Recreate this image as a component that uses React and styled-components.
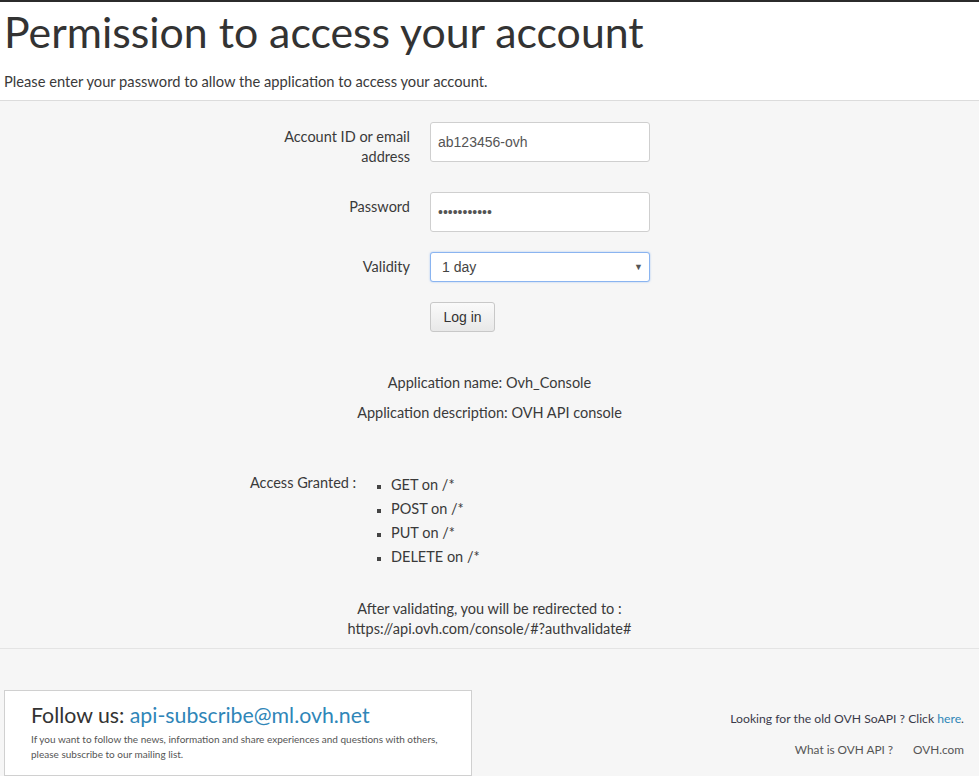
import React from 'react';
import styled, { createGlobalStyle } from 'styled-components';

const GlobalStyle = createGlobalStyle`
  html, body {
    margin: 0;
    padding: 0;
    background: #f6f6f6;
  }
  body {
    font-family: Lato, "Open Sans", sans-serif;
    color: #3a3a3a;
    font-size: 14.5px;
  }
`;

const rights = ['GET', 'POST', 'PUT', 'DELETE'];

function App() {
  return (
    <Page>
      <GlobalStyle />
      <Header>
        <Title>Permission to access your account</Title>
        <Lead>Please enter your password to allow the application to access your account.</Lead>
      </Header>

      <Main>
        <Form>
          <Label>Account ID or email address</Label>
          <Input type="text" defaultValue="ab123456-ovh" />

          <Label>Password</Label>
          <Input type="password" defaultValue="ab123456789" />

          <Label>Validity</Label>
          <SelectBox>
            <span>1 day</span>
            <Caret>▼</Caret>
          </SelectBox>

          <span />
          <Button type="button">Log in</Button>
        </Form>

        <AppInfo>
          <p>Application name: Ovh_Console</p>
          <p>Application description: OVH API console</p>
        </AppInfo>

        <Access>
          <AccessLabel>Access Granted :</AccessLabel>
          <RightList>
            {rights.map((r) => (
              <li key={r}>{r} on /*</li>
            ))}
          </RightList>
        </Access>

        <Redirect>
          After validating, you will be redirected to :<br />
          https://api.ovh.com/console/#?authvalidate#
        </Redirect>
      </Main>

      <Footer>
        <FollowBox>
          <FollowTitle>
            Follow us: <a href="#">api-subscribe@ml.ovh.net</a>
          </FollowTitle>
          <FollowText>
            If you want to follow the news, information and share experiences and questions with others,
            please subscribe to our mailing list.
          </FollowText>
        </FollowBox>
        <FooterLinks>
          <p>
            Looking for the old OVH SoAPI ? Click <a href="#">here</a>.
          </p>
          <FooterNav>
            <a href="#">What is OVH API ?</a>
            <a href="#">OVH.com</a>
          </FooterNav>
        </FooterLinks>
      </Footer>
    </Page>
  );
}

const Page = styled.div`
  border-top: 2px solid #2b2b2b;
  min-height: 774px;
`;

const Header = styled.header`
  background: #fff;
  border-bottom: 1px solid #dcdcdc;
  padding: 6px 4px 10px;
`;

const Title = styled.h1`
  margin: 0;
  font-size: 42.8px;
  font-weight: 400;
  line-height: 48px;
  color: #333;
`;

const Lead = styled.p`
  margin: 16px 0 0;
  font-size: 14.7px;
  line-height: 18px;
`;

const Main = styled.main`
  border-bottom: 1px solid #e4e4e4;
  padding: 21px 0 9px;
`;

const Form = styled.div`
  display: grid;
  grid-template-columns: 130px 220px;
  column-gap: 20px;
  row-gap: 20px;
  padding-left: 280px;
  align-items: start;
`;

const Label = styled.label`
  text-align: right;
  line-height: 20px;
  padding: 5px 0;
`;

const Input = styled.input`
  box-sizing: border-box;
  width: 220px;
  height: 40px;
  border: 1px solid #cfcfcf;
  border-radius: 3px;
  background: #fff;
  padding: 0 7px;
  font-family: "Liberation Sans", Arial, sans-serif;
  font-size: 14px;
  color: #555;
  outline: none;
`;

const SelectBox = styled.div`
  box-sizing: border-box;
  width: 220px;
  height: 30px;
  border: 1px solid #8ab4f0;
  border-radius: 3px;
  background: #fff;
  box-shadow: 0 0 2px rgba(102, 160, 240, 0.6);
  display: flex;
  align-items: center;
  justify-content: space-between;
  padding: 0 6px 0 11px;
  font-family: "Liberation Sans", Arial, sans-serif;
  font-size: 14px;
  color: #444;
`;

const Caret = styled.span`
  font-size: 9px;
  color: #555;
`;

const Button = styled.button`
  box-sizing: border-box;
  width: 65px;
  height: 30px;
  border: 1px solid #c8c8c8;
  border-radius: 3px;
  background: linear-gradient(#fafafa, #e8e8e8);
  font-family: "Liberation Sans", Arial, sans-serif;
  font-size: 14px;
  color: #333;
  padding: 0;
`;

const AppInfo = styled.div`
  text-align: center;
  padding: 42px 0 0 0;
  p {
    margin: 0 0 12px;
    line-height: 18px;
  }
`;

const Access = styled.div`
  display: flex;
  align-items: flex-start;
  padding: 39px 0 0 250px;
`;

const AccessLabel = styled.span`
  width: 110px;
  line-height: 20px;
`;

const RightList = styled.ul`
  margin: 0;
  padding: 0 0 0 31px;
  list-style: square;
  li {
    line-height: 24px;
  }
  li::marker {
    font-size: 11px;
    color: #444;
  }
`;

const Redirect = styled.p`
  margin: 30px 0 0;
  text-align: center;
  line-height: 20px;
`;

const Footer = styled.footer`
  display: flex;
  justify-content: space-between;
  align-items: flex-start;
  padding: 41px 15px 0 4px;
`;

const FollowBox = styled.div`
  box-sizing: border-box;
  width: 468px;
  height: 86px;
  background: #fff;
  border: 1px solid #d0d0d0;
  padding: 11px 24px 0 26px;
`;

const FollowTitle = styled.h3`
  margin: 0;
  font-size: 21.3px;
  font-weight: 400;
  line-height: 26px;
  color: #333;
  a {
    color: #2f86b8;
    text-decoration: none;
  }
`;

const FollowText = styled.p`
  margin: 4px 0 0;
  font-size: 10px;
  line-height: 15px;
  color: #555;
`;

const FooterLinks = styled.div`
  text-align: right;
  padding-top: 21px;
  font-size: 12.2px;
  p {
    margin: 0;
    line-height: 16px;
    color: #3a3a4a;
  }
  a {
    color: #2f86b8;
    text-decoration: none;
  }
`;

const FooterNav = styled.div`
  display: flex;
  justify-content: flex-end;
  gap: 20px;
  margin-top: 15px;
  a {
    color: #555;
    line-height: 16px;
    font-size: 11.8px;
  }
`;

export default App;
